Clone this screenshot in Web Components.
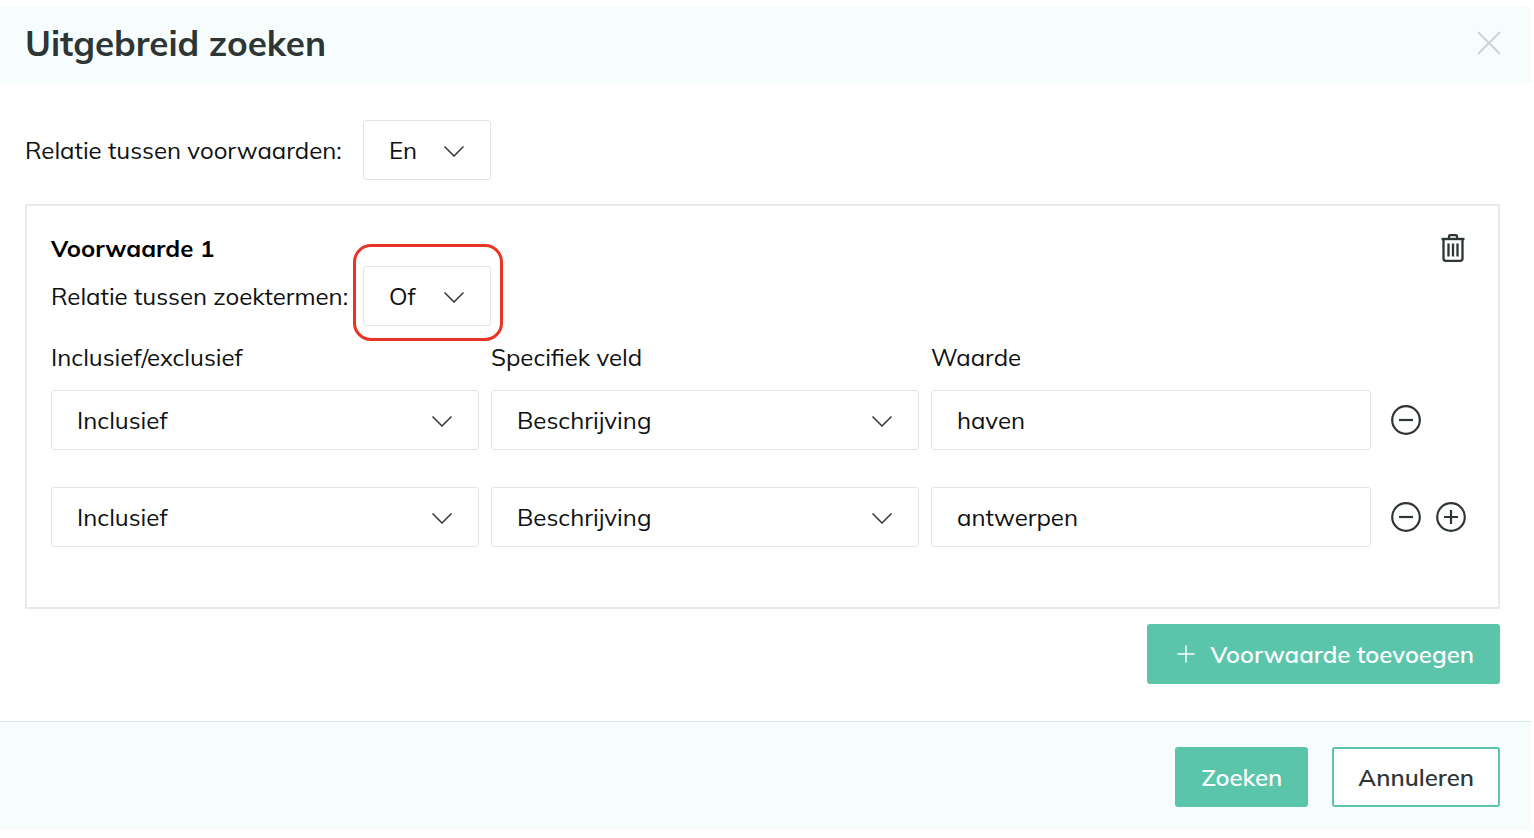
<!DOCTYPE html>
<html lang="nl">
<head>
<meta charset="utf-8">
<title>Uitgebreid zoeken</title>
<style>
  body {
    margin: 0;
    padding: 6px 3px 8px 0;
    background: #fff;
    color: #0f1111;
    font: 24px/30px Mulish, Muli, "Open Sans", sans-serif;
    --mint: #5bc5ab;
    --tint: #f7fdfd;
    --line: #e6eaea;
    --field-line: #e0e5e5;
    --ink: #2d3535;
  }
</style>
</head>
<body>
<search-dialog>
  <span slot="title">Uitgebreid zoeken</span>
  <search-relation></search-relation>
  <search-condition></search-condition>
  <action-button slot="add" icon="plus">Voorwaarde toevoegen</action-button>
  <action-button slot="actions">Zoeken</action-button>
  <action-button slot="actions" kind="outline">Annuleren</action-button>
</search-dialog>

<script>
const ICONS = {
  close: ['0 0 24 24', '<path d="M1 1 23 23M23 1 1 23" stroke-width="2"/>'],
  trash: ['0 0 24 28', '<path d="M.5 5h23" stroke-width="2.400"/><path d="M8 4V2.500Q8 1.200 9.300 1.200h5.400Q16 1.200 16 2.500V4M2.500 5v19.500q0 2.300 2.300 2.300h14.400q2.300 0 2.300-2.300V5M7.500 9.500v13M12 9.500v13M16.500 9.500v13" stroke-width="2.300"/>'],
  minus: ['0 0 30 30', '<circle cx="15" cy="15" r="13.800" stroke-width="2.200"/><path d="M8 15h14" stroke-width="2.200"/>'],
  add: ['0 0 30 30', '<circle cx="15" cy="15" r="13.800" stroke-width="2.200"/><path d="M8 15h14M15 8v14" stroke-width="2.200"/>'],
  plus: ['0 0 18 18', '<path d="M.5 9h17M9 .5v17" stroke-width="1.400"/>'],
  chevron: ['0 0 20 12', '<path d="M.5 1.500 10 11 19.500 1.500" stroke-width="1.500"/>']
};

function attach(host, html) {
  host.attachShadow({ mode: 'open' }).innerHTML = html;
}

customElements.define('line-icon', class extends HTMLElement {
  connectedCallback() {
    if (this.shadowRoot) return;
    const [box, shape] = ICONS[this.getAttribute('name')];
    const [, , w, h] = box.split(' ');
    attach(this, `<style>:host{display:inline-flex;flex:none}svg{display:block}</style>
      <svg width="${w}" height="${h}" viewBox="${box}" fill="none" stroke="currentColor" aria-hidden="true">${shape}</svg>`);
  }
});

const FIELD_CSS = `
  .pick { position: relative; display: grid; align-items: center; }
  .pick line-icon { position: absolute; right: 27px; top: 25px; color: var(--ink); pointer-events: none; }
  select, input {
    box-sizing: border-box; width: 100%; height: 60px; margin: 0; padding: 0 25px;
    border: 1px solid var(--field-line); border-radius: 3px; background: #fff;
    font: inherit; color: inherit; appearance: none; outline: none;
  }
  .short { width: 128px; }`;

customElements.define('action-button', class extends HTMLElement {
  connectedCallback() {
    if (this.shadowRoot) return;
    const icon = this.getAttribute('icon');
    attach(this, `<style>
      :host { display: inline-flex; }
      button { display: flex; align-items: center; gap: 16px; height: 60px; margin: 0; padding: 0 24px;
        border: 2px solid var(--mint); border-radius: 3px; background: var(--mint); color: #fff;
        font: inherit; font-weight: 600; cursor: pointer; }
      line-icon { margin-left: 4px; }
      :host([kind=outline]) button { background: #fff; color: var(--ink); }
      </style><button type="button">${icon ? `<line-icon name="${icon}"></line-icon>` : ''}<slot></slot></button>`);
  }
});

customElements.define('search-relation', class extends HTMLElement {
  connectedCallback() {
    if (this.shadowRoot) return;
    attach(this, `<style>${FIELD_CSS}
      :host { display: flex; align-items: center; }
      label { width: 338px; white-space: nowrap; }
      </style>
      <label for="rel">Relatie tussen voorwaarden:</label>
      <div class="pick short"><select id="rel"><option>En</option><option>Of</option></select><line-icon name="chevron"></line-icon></div>`);
  }
});

customElements.define('search-condition', class extends HTMLElement {
  connectedCallback() {
    if (this.shadowRoot) return;
    const values = ['haven', 'antwerpen'];
    const rows = values.map((value, i) => `
      <div class="row">
        <div class="pick"><select id="mode${i}" aria-label="Inclusief/exclusief"><option>Inclusief</option><option>Exclusief</option></select><line-icon name="chevron"></line-icon></div>
        <div class="pick"><select id="field${i}" aria-label="Specifiek veld"><option>Beschrijving</option></select><line-icon name="chevron"></line-icon></div>
        <input id="value${i}" type="text" aria-label="Waarde" value="${value}">
        <div class="tools">
          <button type="button" aria-label="Zoekterm verwijderen"><line-icon name="minus"></line-icon></button>
          ${i === values.length - 1 ? '<button type="button" aria-label="Zoekterm toevoegen"><line-icon name="add"></line-icon></button>' : ''}
        </div>
      </div>`).join('');
    attach(this, `<style>${FIELD_CSS}
      :host { display: block; box-sizing: border-box; margin-top: 24px; padding: 27px 24px 60px; border: 2px solid var(--line); }
      .top { display: flex; align-items: flex-start; justify-content: space-between; height: 33px; padding-right: 9px; }
      h2 { margin: 0; font: inherit; font-weight: 700; color: #000; }
      button { display: flex; align-items: center; margin: 0; padding: 0; border: 0; background: none; color: var(--ink); cursor: pointer; }
      .top button { height: 30px; }
      .relation { display: flex; align-items: center; }
      .relation label { width: 312px; white-space: nowrap; }
      .marked::after { content: ""; position: absolute; inset: -22px -12px -15px -10px;
        border: 3px solid #e93424; border-radius: 18px; pointer-events: none; }
      .row { display: grid; grid-template-columns: 1fr 1fr 1fr 103px; align-items: center; }
      .row .pick { margin-right: 12px; }
      .heads { margin: 16px 0 18px; }
      .rows { display: grid; gap: 37px; }
      .tools { display: flex; gap: 15px; padding-left: 20px; }
      </style>
      <div class="top"><h2>Voorwaarde 1</h2><button type="button" aria-label="Voorwaarde verwijderen"><line-icon name="trash"></line-icon></button></div>
      <div class="relation"><label for="terms">Relatie tussen zoektermen:</label>
        <div class="pick short marked"><select id="terms"><option>Of</option><option>En</option></select><line-icon name="chevron"></line-icon></div></div>
      <div class="row heads"><label for="mode0">Inclusief/exclusief</label><label for="field0">Specifiek veld</label><label for="value0">Waarde</label></div>
      <div class="rows">${rows}</div>`);
  }
});

customElements.define('search-dialog', class extends HTMLElement {
  connectedCallback() {
    if (this.shadowRoot) return;
    attach(this, `<style>
      :host { display: block; }
      header { display: flex; align-items: center; justify-content: space-between; height: 77px;
        box-sizing: border-box; padding: 0 30px 4px 25px; background: var(--tint); }
      h1 { margin: 0; font-size: 35px; line-height: 42px; font-weight: 700; color: var(--ink); }
      header button { display: flex; margin: 0; padding: 0; border: 0; background: none; color: #cdd2d2; cursor: pointer; }
      main { padding: 37px 31px 37px 25px; }
      .add { display: flex; justify-content: flex-end; margin-top: 15px; }
      footer { display: flex; justify-content: flex-end; gap: 24px; padding: 25px 31px 23px 25px;
        border-top: 1px solid #d3ecea; background: var(--tint); }
      </style>
      <header><h1><slot name="title"></slot></h1><button type="button" aria-label="Sluiten"><line-icon name="close"></line-icon></button></header>
      <main><slot></slot><div class="add"><slot name="add"></slot></div></main>
      <footer><slot name="actions"></slot></footer>`);
  }
});
</script>
</body>
</html>
